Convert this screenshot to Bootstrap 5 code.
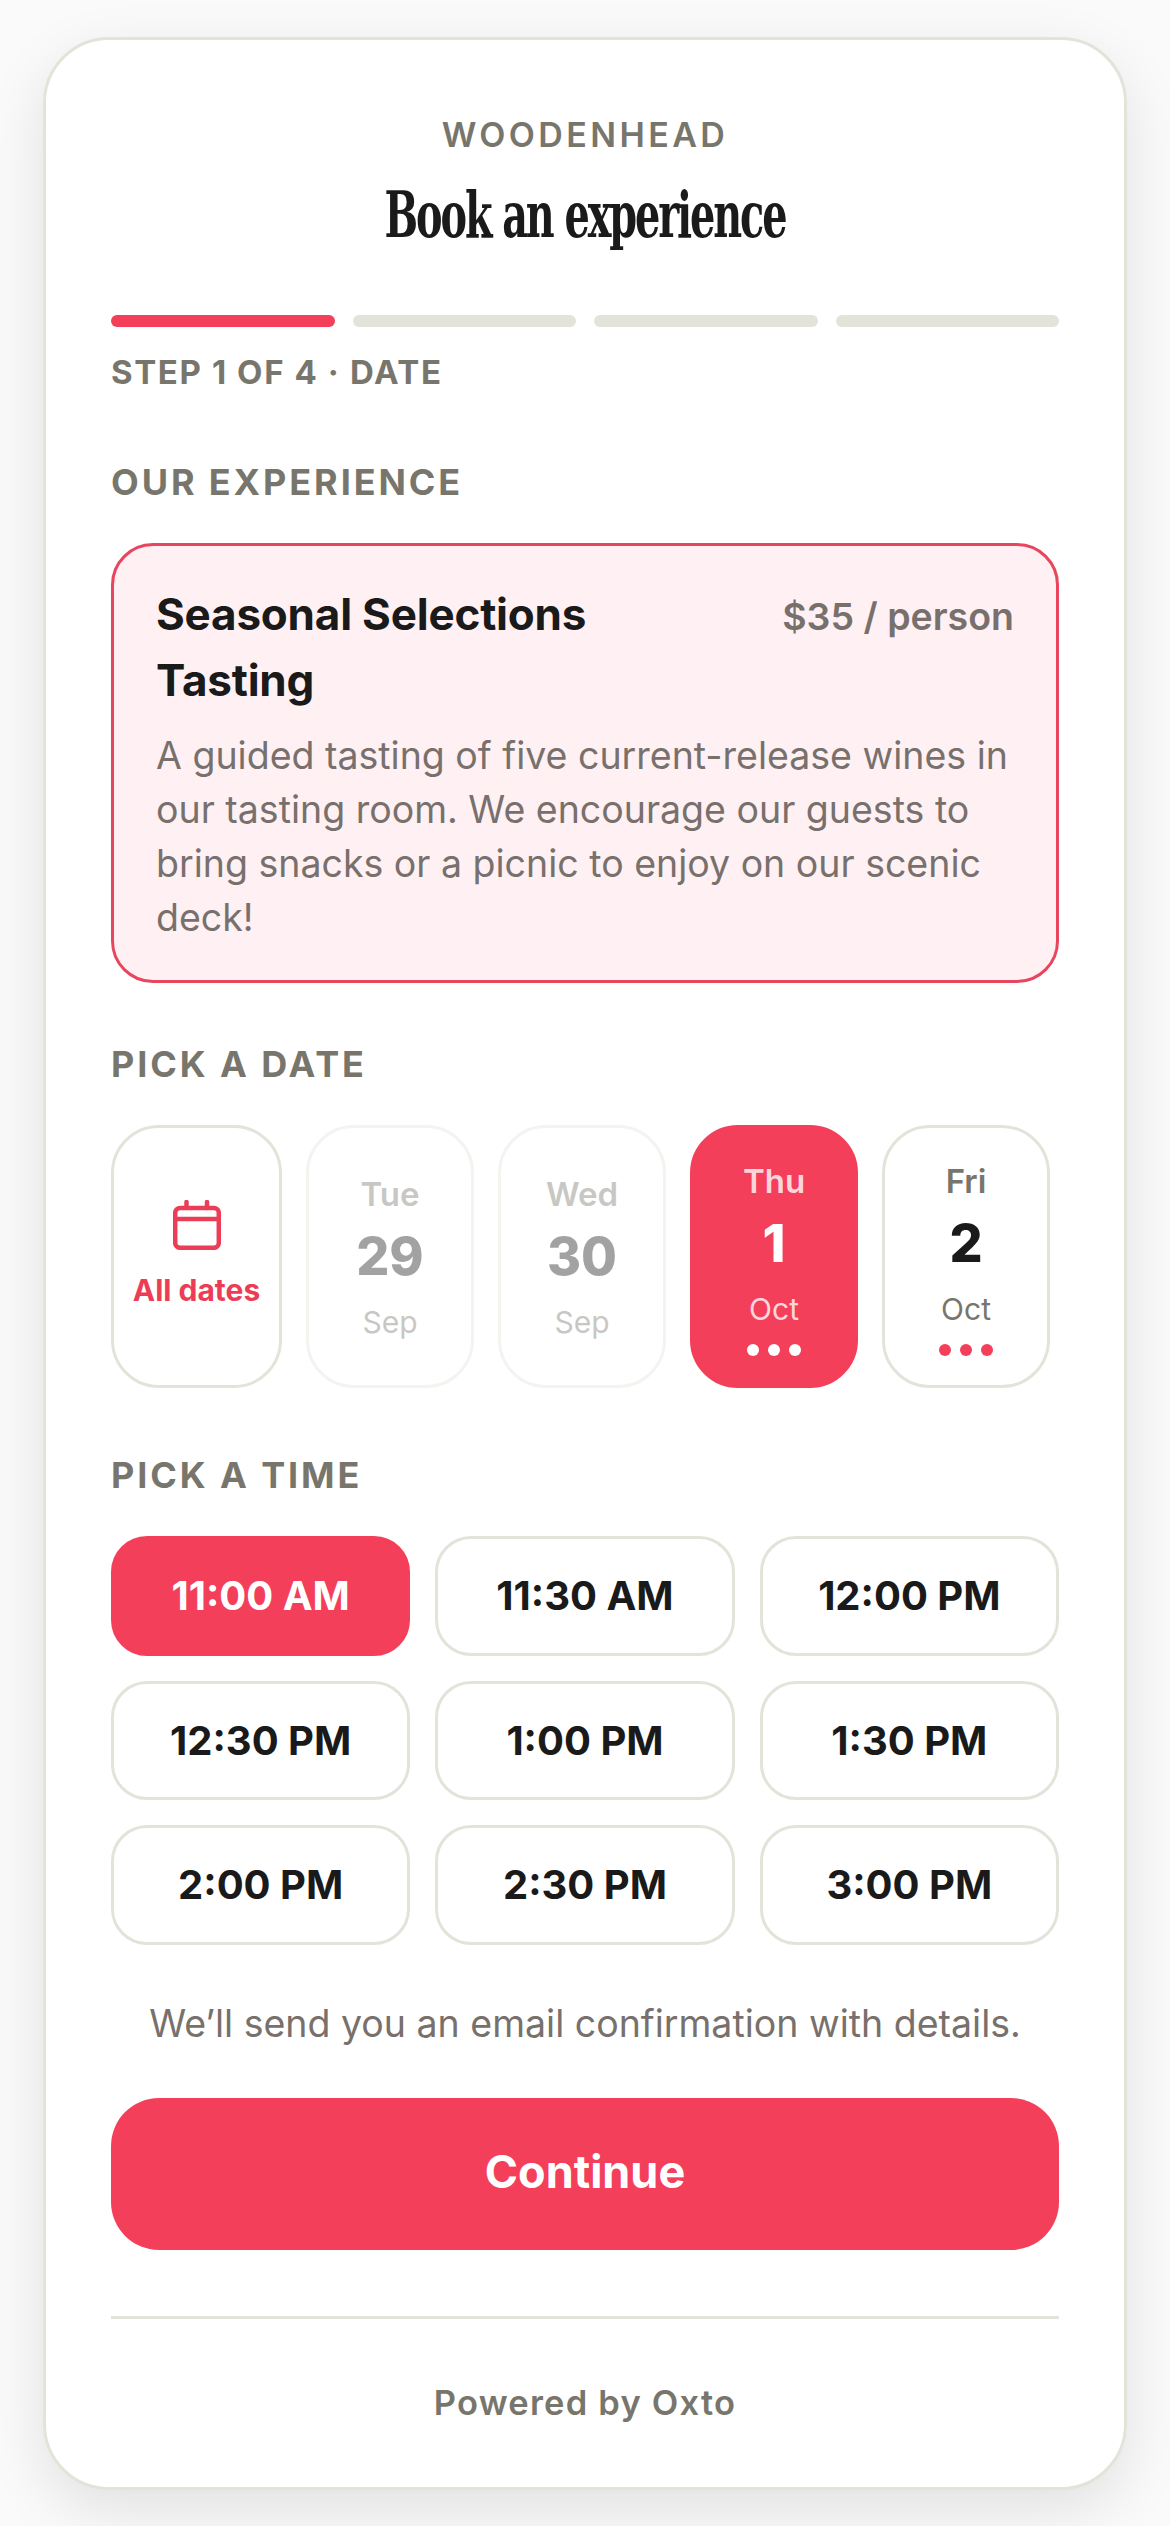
<!DOCTYPE html>
<html lang="en">
<head>
  <meta charset="UTF-8" />
  <meta name="viewport" content="width=device-width, initial-scale=1.0"/>
  <title>Book an experience</title>
  <link href="https://cdn.jsdelivr.net/npm/bootstrap@5.3.0/dist/css/bootstrap.min.css" rel="stylesheet">
  <style>
    body {
      font-family: Inter, "Liberation Sans", sans-serif;
      background: #fafafa;
      color: #1a1a1a;
      padding: 37px 43px 0;
      height: 2526px;
      overflow: hidden;
    }
    .book-card {
      background: #fff;
      border: 3px solid #e4e3da;
      border-radius: 66px;
      box-shadow: 0 20px 60px rgba(0, 0, 0, .1);
      padding: 75px 65px 64px;
    }
    .brand {
      font-size: 34px;
      line-height: 40px;
      font-weight: 600;
      letter-spacing: 3.4px;
      color: #78766c;
    }
    .book-title {
      font-family: "DejaVu Serif Condensed", "DejaVu Serif", serif;
      font-size: 64px;
      line-height: 72px;
      font-weight: 700;
      letter-spacing: -3px;
      margin: 24px 0 0;
      color: #1a1a1a;
      transform: scaleX(.69);
      white-space: nowrap;
    }
    .steps { margin-top: 64px; gap: 18px; }
    .step-bar { height: 12px; flex: 1 1 0; border-radius: 6px; background: #e4e3da; }
    .step-bar.on { background: #f43f5a; }
    .step-text {
      margin-top: 25px;
      font-size: 33px;
      line-height: 40px;
      font-weight: 700;
      letter-spacing: 1.6px;
      color: #78766c;
    }
    .sect {
      font-size: 36px;
      line-height: 44px;
      font-weight: 700;
      letter-spacing: 2.9px;
      color: #78766c;
      margin: 59px 0 39px;
    }
    .sect.first { margin-top: 68px; }
    .sect.times { margin-top: 65px; }
    .exp-box {
      background: #fff1f3;
      border: 3px solid #e8455f;
      border-radius: 42px;
      padding: 35px 42px;
    }
    .exp-head { gap: 70px; }
    .exp-name { font-size: 44px; line-height: 66px; font-weight: 700; letter-spacing: -.2px; }
    .exp-price { font-size: 37.5px; line-height: 66px; font-weight: 600; color: #78706c; white-space: nowrap; padding-top: 3px; }
    .exp-desc { margin-top: 16px; font-size: 37.5px; line-height: 54px; color: #78706c; }
    .date-tile {
      flex: 0 0 168px;
      height: 263px;
      border: 3px solid #e4e3da;
      border-radius: 48px;
      background: #fff;
      color: #78766c;
    }
    .date-tile.all { flex-basis: 171px; padding-bottom: 4px; }
    .date-tile.off { opacity: .4; padding-top: 4px; }
    .date-tile.sel { background: #f43f5a; border-color: #f43f5a; color: #fff; }
    .t-day { font-size: 33px; line-height: 48px; font-weight: 600; }
    .t-num { font-size: 52px; line-height: 78px; font-weight: 800; color: #1a1a1a; }
    .t-mon { font-size: 30px; line-height: 52px; }
    .sel .t-day, .sel .t-mon { color: rgba(255, 255, 255, .8); }
    .sel .t-num { color: #fff; }
    .t-dots { gap: 9px; margin-top: 9px; }
    .t-dots i { width: 12px; height: 12px; border-radius: 50%; background: #f43f5a; }
    .sel .t-dots i { background: #fff; }
    .t-all { font-size: 30px; line-height: 40px; font-weight: 700; color: #ec3d57; margin-top: 20px; }
    .time-grid { display: grid; grid-template-columns: repeat(3, 1fr); gap: 25px; }
    .time-btn {
      height: 119.5px;
      border: 3px solid #e4e3da;
      border-radius: 36px;
      background: #fff;
      color: #1a1a1a;
      font-size: 40px;
      font-weight: 700;
      padding: 1px 0 0;
    }
    .time-btn.sel { background: #f43f5a; border-color: #f43f5a; color: #fff; }
    .note { margin-top: 52.5px; font-size: 37.5px; line-height: 54px; color: #78706c; }
    .go-btn {
      margin-top: 47px;
      height: 152px;
      border: 0;
      border-radius: 48px;
      background: #f43f5a;
      color: #fff;
      font-size: 45px;
      font-weight: 700;
      padding: 0 0 5px;
    }
    .foot-line { margin-top: 66px; height: 3px; background: #e4e3da; }
    .powered {
      margin-top: 64px;
      font-size: 34.5px;
      line-height: 40px;
      font-weight: 600;
      letter-spacing: 1.2px;
      color: #78766c;
    }
  </style>
</head>
<body>
  <div class="book-card">
    <div class="brand text-center">WOODENHEAD</div>
    <h1 class="book-title text-center">Book an experience</h1>

    <div class="steps d-flex">
      <div class="step-bar on"></div>
      <div class="step-bar"></div>
      <div class="step-bar"></div>
      <div class="step-bar"></div>
    </div>
    <div class="step-text">STEP 1 OF 4 · DATE</div>

    <div class="sect first">OUR EXPERIENCE</div>
    <div class="exp-box">
      <div class="exp-head d-flex justify-content-between">
        <div class="exp-name">Seasonal Selections Tasting</div>
        <div class="exp-price">$35 / person</div>
      </div>
      <div class="exp-desc">A guided tasting of five current-release wines in our tasting room. We encourage our guests to bring snacks or a picnic to enjoy on our scenic deck!</div>
    </div>

    <div class="sect">PICK A DATE</div>
    <div class="d-flex gap-4">
      <div class="date-tile all d-flex flex-column align-items-center justify-content-center">
        <svg width="48" height="50" viewBox="0 0 48 50" fill="none" stroke="#ec3d57" stroke-width="4.5" stroke-linecap="round" stroke-linejoin="round">
          <rect x="2.2" y="8" width="43.6" height="39.8" rx="5"/>
          <path d="M2.2 19H45.8M13.5 2V8M34 2V8"/>
        </svg>
        <div class="t-all">All dates</div>
      </div>
      <div class="date-tile off d-flex flex-column align-items-center justify-content-center">
        <div class="t-day">Tue</div><div class="t-num">29</div><div class="t-mon">Sep</div>
      </div>
      <div class="date-tile off d-flex flex-column align-items-center justify-content-center">
        <div class="t-day">Wed</div><div class="t-num">30</div><div class="t-mon">Sep</div>
      </div>
      <div class="date-tile sel d-flex flex-column align-items-center justify-content-center">
        <div class="t-day">Thu</div><div class="t-num">1</div><div class="t-mon">Oct</div>
        <div class="t-dots d-flex"><i></i><i></i><i></i></div>
      </div>
      <div class="date-tile d-flex flex-column align-items-center justify-content-center">
        <div class="t-day">Fri</div><div class="t-num">2</div><div class="t-mon">Oct</div>
        <div class="t-dots d-flex"><i></i><i></i><i></i></div>
      </div>
    </div>

    <div class="sect times">PICK A TIME</div>
    <div class="time-grid">
      <button class="btn time-btn sel">11:00 AM</button>
      <button class="btn time-btn">11:30 AM</button>
      <button class="btn time-btn">12:00 PM</button>
      <button class="btn time-btn">12:30 PM</button>
      <button class="btn time-btn">1:00 PM</button>
      <button class="btn time-btn">1:30 PM</button>
      <button class="btn time-btn">2:00 PM</button>
      <button class="btn time-btn">2:30 PM</button>
      <button class="btn time-btn">3:00 PM</button>
    </div>

    <div class="note text-center">We’ll send you an email confirmation with details.</div>
    <button class="btn go-btn w-100 d-block">Continue</button>
    <div class="foot-line"></div>
    <div class="powered text-center">Powered by Oxto</div>
  </div>
  <script src="https://cdn.jsdelivr.net/npm/bootstrap@5.3.0/dist/js/bootstrap.bundle.min.js"></script>
</body>
</html>
